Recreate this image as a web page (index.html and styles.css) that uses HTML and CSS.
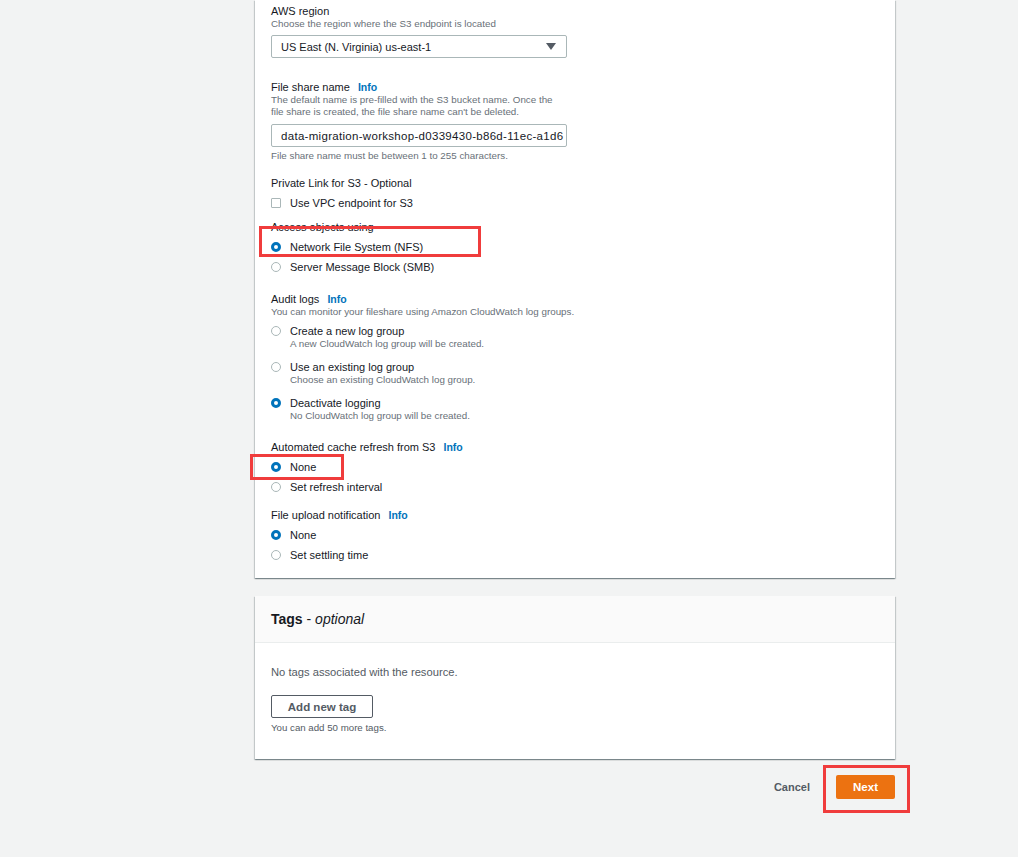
FILE: index.html
```html
<!DOCTYPE html>
<html lang="en">
<head>
    <meta charset="UTF-8">
    <title>Create file share</title>
    <link rel="stylesheet" href="styles.css">
</head>
<body>
    <div class="main">
        <div class="card settings">
            <div class="field">
                <div class="label">AWS region</div>
                <div class="desc">Choose the region where the S3 endpoint is located</div>
                <div class="select">
                    <span>US East (N. Virginia) us-east-1</span>
                    <span class="caret"></span>
                </div>
            </div>

            <div class="field f-name">
                <div class="label">File share name <a class="info">Info</a></div>
                <div class="desc">The default name is pre-filled with the S3 bucket name. Once the<br>file share is created, the file share name can't be deleted.</div>
                <div class="input">data-migration-workshop-d0339430-b86d-11ec-a1d6</div>
                <div class="hint">File share name must be between 1 to 255 characters.</div>
            </div>

            <div class="field f-private">
                <div class="label">Private Link for S3 - Optional</div>
                <div class="row"><span class="checkbox"></span>Use VPC endpoint for S3</div>
            </div>

            <div class="field f-access">
                <div class="label">Access objects using</div>
                <div class="row mark mark-nfs"><span class="radio on"></span>Network File System (NFS)</div>
                <div class="row"><span class="radio"></span>Server Message Block (SMB)</div>
            </div>

            <div class="field f-audit">
                <div class="label">Audit logs <a class="info">Info</a></div>
                <div class="desc">You can monitor your fileshare using Amazon CloudWatch log groups.</div>
                <div class="option">
                    <span class="radio"></span>
                    <div>
                        <div class="label">Create a new log group</div>
                        <div class="desc">A new CloudWatch log group will be created.</div>
                    </div>
                </div>
                <div class="option">
                    <span class="radio"></span>
                    <div>
                        <div class="label">Use an existing log group</div>
                        <div class="desc">Choose an existing CloudWatch log group.</div>
                    </div>
                </div>
                <div class="option">
                    <span class="radio on"></span>
                    <div>
                        <div class="label">Deactivate logging</div>
                        <div class="desc">No CloudWatch log group will be created.</div>
                    </div>
                </div>
            </div>

            <div class="field f-cache">
                <div class="label">Automated cache refresh from S3 <a class="info">Info</a></div>
                <div class="row mark mark-none"><span class="radio on"></span>None</div>
                <div class="row"><span class="radio"></span>Set refresh interval</div>
            </div>

            <div class="field f-upload">
                <div class="label">File upload notification <a class="info">Info</a></div>
                <div class="row"><span class="radio on"></span>None</div>
                <div class="row"><span class="radio"></span>Set settling time</div>
            </div>
        </div>

        <div class="card tags">
            <div class="card-header"><b>Tags</b> - <i>optional</i></div>
            <div class="card-body">
                <div class="muted">No tags associated with the resource.</div>
                <button class="btn">Add new tag</button>
                <div class="muted small">You can add 50 more tags.</div>
            </div>
        </div>

        <div class="actions">
            <a class="cancel">Cancel</a>
            <button class="btn-primary mark mark-next">Next</button>
        </div>
    </div>
</body>
</html>
```

FILE: styles.css
```css
body {
    margin: 0;
    background: #f2f3f3;
    font-family: "Liberation Sans", Arial, sans-serif;
    color: #16191f;
    font-size: 11px;
}
.main {
    margin-left: 255px;
    width: 640px;
    padding-bottom: 57px;
}
.card {
    background: #fff;
    box-shadow: 0 1px 1px 0 rgba(0,28,36,0.3), 1px 1px 1px 0 rgba(0,28,36,0.15), -1px 1px 1px 0 rgba(0,28,36,0.15);
}
.settings {
    padding: 4px 16px 13px;
}
.label {
    font-size: 11px;
    line-height: 14px;
    height: 14px;
}
.desc, .hint {
    font-size: 9.8px;
    line-height: 12px;
    color: #687078;
}
.info {
    color: #0073bb;
    font-weight: bold;
    font-size: 10.5px;
    line-height: 10px;
    margin-left: 5px;
}
.field {
    margin-bottom: 22px;
}
.select, .input {
    box-sizing: border-box;
    width: 296px;
    height: 23px;
    border: 1px solid #aab7b8;
    border-radius: 2px;
    display: flex;
    align-items: center;
    padding: 0 9px;
    font-size: 11px;
    overflow: hidden;
    white-space: nowrap;
}
.select {
    margin-top: 5px;
    justify-content: space-between;
}
.caret {
    width: 0;
    height: 0;
    border-left: 5px solid transparent;
    border-right: 5px solid transparent;
    border-top: 7px solid #545b64;
    margin-right: 1px;
}
.input {
    margin-top: 6px;
    font-size: 11.5px;
    letter-spacing: 0.3px;
}
.hint {
    margin-top: 3px;
}
.f-name {
    margin-bottom: 14px;
}
.f-private {
    margin-bottom: 7px;
}
.f-access {
    margin-bottom: 15px;
}
.f-audit {
    margin-bottom: 18px;
}
.f-cache {
    margin-bottom: 11px;
}
.f-upload {
    margin-bottom: 0;
}
.row {
    display: flex;
    align-items: center;
    height: 20px;
    font-size: 11px;
}
.label + .row {
    margin-top: 3px;
}
.checkbox {
    box-sizing: border-box;
    width: 10px;
    height: 10px;
    border: 1px solid #aab7b8;
    border-radius: 1px;
    margin-right: 9px;
}
.radio {
    box-sizing: border-box;
    width: 10px;
    height: 10px;
    border: 1px solid #aab7b8;
    border-radius: 50%;
    margin-right: 9px;
    flex: none;
}
.radio.on {
    border: 3px solid #0073bb;
}
.option {
    display: flex;
    align-items: flex-start;
    margin-top: 10px;
}
.desc + .option {
    margin-top: 6px;
}
.option .radio {
    margin-top: 2px;
}
.mark {
    position: relative;
}
.mark::after {
    content: "";
    position: absolute;
    box-sizing: border-box;
    border: 3px solid #f03c3c;
    pointer-events: none;
}
.mark-nfs::after {
    left: -12px;
    top: -11px;
    width: 222px;
    height: 31px;
}
.mark-none::after {
    left: -21px;
    top: -3px;
    width: 94px;
    height: 26px;
}
.mark-next::after {
    left: -13px;
    top: -10px;
    width: 87px;
    height: 48px;
}
.tags {
    margin-top: 18px;
}
.card-header {
    background: #fafafa;
    border-bottom: 1px solid #eaeded;
    height: 46px;
    display: flex;
    align-items: center;
    padding: 0 16px;
    font-size: 14px;
    white-space: pre;
}
.card-body {
    padding: 23px 16px 25px;
}
.muted {
    font-size: 11.2px;
    line-height: 12px;
    color: #545b64;
}
.btn {
    display: block;
    margin-top: 17px;
    width: 102px;
    height: 23px;
    background: #fff;
    border: 1px solid #545b64;
    border-radius: 2px;
    color: #545b64;
    font-family: inherit;
    font-weight: bold;
    font-size: 11.5px;
    padding: 0;
}
.small {
    margin-top: 4px;
    font-size: 9.7px;
}
.actions {
    display: flex;
    justify-content: flex-end;
    align-items: center;
    margin-top: 16px;
}
.cancel {
    color: #545b64;
    font-weight: bold;
    font-size: 11px;
    margin-right: 26px;
}
.btn-primary {
    width: 59px;
    height: 24px;
    background: #ec7211;
    border: none;
    border-radius: 2px;
    color: #fff;
    font-family: inherit;
    font-weight: bold;
    font-size: 11.5px;
    padding: 0;
}
```
